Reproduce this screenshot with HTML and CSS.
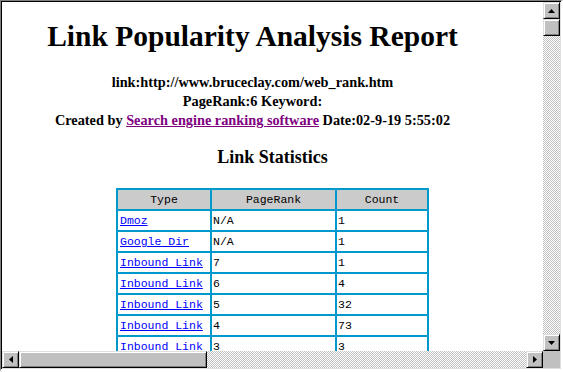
FILE: index.html
```html
<!DOCTYPE html>
<html lang="en">
<head>
  <meta charset="UTF-8" />
  <title>Link Popularity Analysis Report</title>
  <link rel="stylesheet" href="styles.css">
</head>
<body>
  <div class="window">
    <div class="viewport">
      <div class="report-head">
        <h1>Link Popularity Analysis Report</h1>
        <p class="meta">
          <b>link:http://www.bruceclay.com/web_rank.htm</b><br>
          <b>PageRank:6 Keyword:</b><br>
          <b>Created by <a href="#" class="visited">Search engine ranking software</a> Date:02-9-19 5:55:02</b>
        </p>
      </div>
      <h3>Link Statistics</h3>
      <table class="stats">
        <tr><th class="c-type">Type</th><th class="c-rank">PageRank</th><th class="c-count">Count</th></tr>
        <tr><td><a href="#">Dmoz</a></td><td>N/A</td><td>1</td></tr>
        <tr><td><a href="#">Google Dir</a></td><td>N/A</td><td>1</td></tr>
        <tr><td><a href="#">Inbound Link</a></td><td>7</td><td>1</td></tr>
        <tr><td><a href="#">Inbound Link</a></td><td>6</td><td>4</td></tr>
        <tr><td><a href="#">Inbound Link</a></td><td>5</td><td>32</td></tr>
        <tr><td><a href="#">Inbound Link</a></td><td>4</td><td>73</td></tr>
        <tr><td><a href="#">Inbound Link</a></td><td>3</td><td>3</td></tr>
      </table>
    </div>

    <div class="vscroll">
      <div class="sb-btn">
        <svg width="7" height="4" viewBox="0 0 7 4"><polygon points="3.5,0 7,4 0,4" fill="#000"/></svg>
      </div>
      <div class="sb-btn thumb-v"></div>
      <div class="track"></div>
      <div class="sb-btn">
        <svg width="7" height="4" viewBox="0 0 7 4"><polygon points="0,0 7,0 3.5,4" fill="#000"/></svg>
      </div>
    </div>

    <div class="hscroll">
      <div class="sb-btn">
        <svg width="4" height="7" viewBox="0 0 4 7"><polygon points="4,0 4,7 0,3.5" fill="#000"/></svg>
      </div>
      <div class="sb-btn thumb-h"></div>
      <div class="track"></div>
      <div class="sb-btn">
        <svg width="4" height="7" viewBox="0 0 4 7"><polygon points="0,0 4,3.5 0,7" fill="#000"/></svg>
      </div>
    </div>

    <div class="corner"></div>
  </div>
</body>
</html>
```

FILE: styles.css
```css
body {
  margin: 0;
  background-color: #ffffff;
}
.window {
  box-sizing: border-box;
  width: 563px;
  height: 372px;
  display: grid;
  grid-template-columns: 541px 17px;
  grid-template-rows: 349px 17px;
  border-style: solid;
  border-width: 1px 2px 3px 1px;
  border-color: #808080 #ffffff #ffffff #808080;
  padding: 1px 1px 1px 1px;
  box-shadow: inset 1px 1px 0 #000000;
  background-color: #dfdfdf;
}
.viewport {
  overflow: hidden;
  background-color: #ffffff;
  font-family: 'Liberation Serif', serif;
  color: #000000;
}
.report-head {
  text-align: center;
  padding-right: 40px;
}
h1 {
  font-size: 29.5px;
  line-height: 36px;
  margin: 16px 0 19px;
}
.meta {
  font-size: 14.3px;
  line-height: 19px;
  margin: 0;
}
.meta a.visited {
  color: #800080;
}
h3 {
  text-align: center;
  font-size: 18px;
  line-height: 22px;
  margin: 16px 0 20px;
}
.stats {
  margin: 0 auto;
  border-collapse: separate;
  border-spacing: 2px;
  background-color: #0099cc;
  font-family: 'Liberation Mono', monospace;
  font-size: 11.5px;
}
.stats th, .stats td {
  height: 19px;
  padding: 0 2px 0 2px;
  box-sizing: border-box;
}
.stats th {
  background-color: #cbcbcb;
  font-weight: normal;
  text-align: center;
}
.stats td {
  background-color: #ffffff;
  text-align: left;
  padding-left: 1px;
}
.stats td:first-child {
  padding-left: 2px;
}
.stats a {
  color: #0000ff;
}
.c-type { width: 92px; }
.c-rank { width: 123px; }
.c-count { width: 90px; }

.vscroll, .hscroll {
  display: flex;
  background-color: #c0c0c0;
}
.vscroll {
  flex-direction: column;
}
.sb-btn {
  box-sizing: border-box;
  flex: 0 0 17px;
  display: flex;
  align-items: center;
  justify-content: center;
  background-color: #c0c0c0;
  border: 1px solid;
  border-color: #dfdfdf #000000 #000000 #dfdfdf;
  box-shadow: inset 1px 1px 0 #ffffff, inset -1px -1px 0 #808080;
}
.thumb-h {
  flex: 0 0 188px;
}
.track {
  flex: 1;
  background: repeating-conic-gradient(#c0c0c0 0 25%, #ffffff 0 50%) 0 0 / 2px 2px;
}
.corner {
  background-color: #c0c0c0;
}
```
